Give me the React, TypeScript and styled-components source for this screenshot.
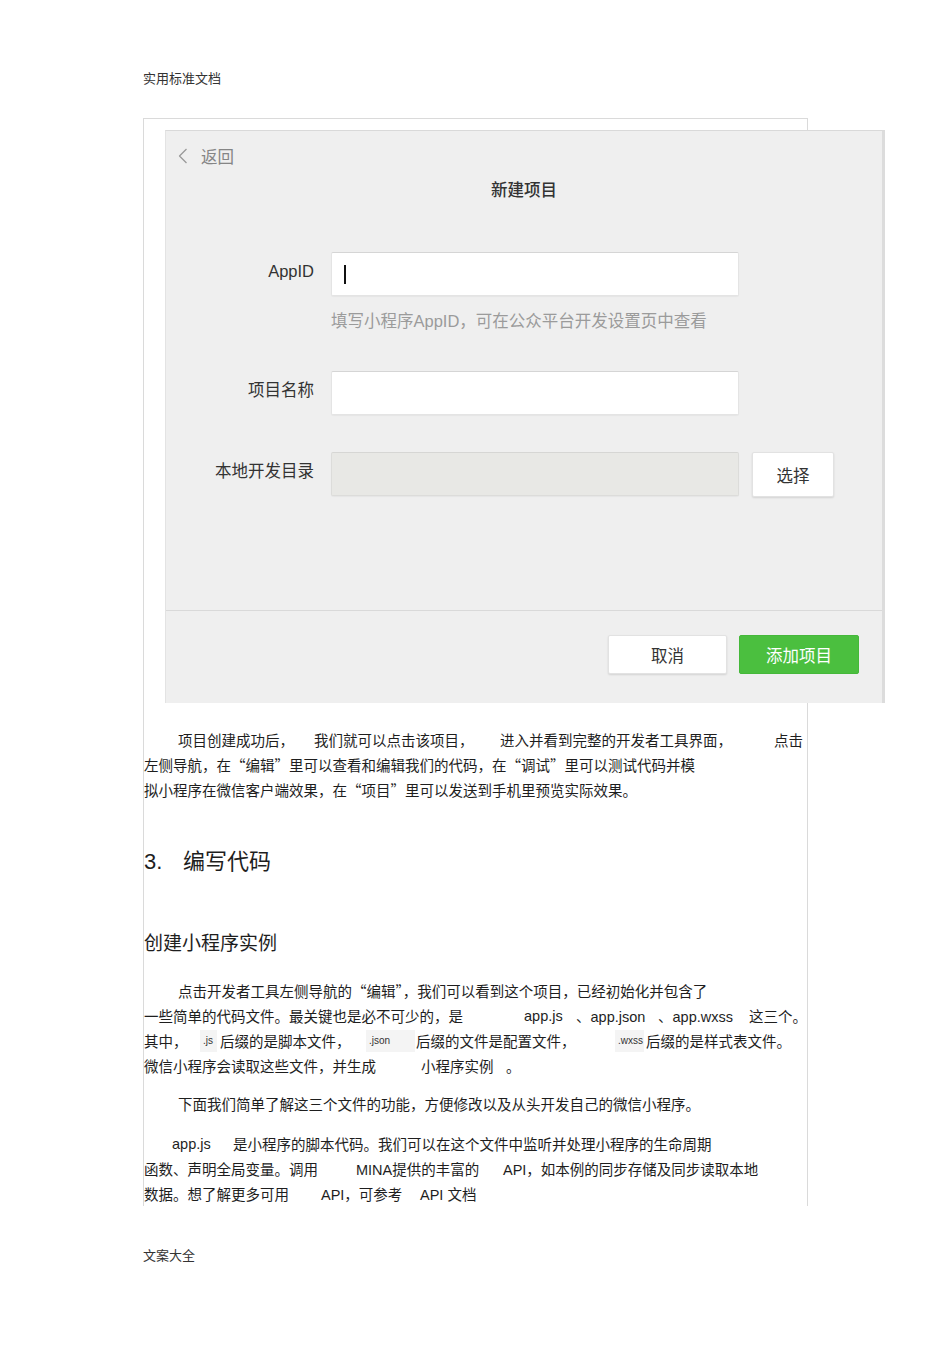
import React from "react";
import styled, { createGlobalStyle } from "styled-components";

const GlobalStyle = createGlobalStyle`
  html, body { margin: 0; padding: 0; background: #fff; }
  body {
    font-family: "Liberation Sans", "Noto Sans CJK SC", sans-serif;
    color: #222;
  }
  * { box-sizing: border-box; }
`;

const Page = styled.div`
  width: 950px;
  padding: 70px 0 80px 143px;
`;

const RunningHead = styled.div<{ $top?: number }>`
  margin-top: ${(p) => p.$top ?? 0}px;
  font-size: 13px;
  line-height: 18px;
  height: 18px;
  color: #333;
`;

const Frame = styled.div`
  margin-top: 30px;
  width: 665px;
  border: 1px solid #dadada;
  border-bottom: none;
  padding-top: 11px;
`;

/* ---------- dialog screenshot ---------- */

const Dialog = styled.section`
  margin-left: 21px;
  width: 720px;
  height: 573px;
  display: flex;
  flex-direction: column;
  background: #efefef;
  border-top: 1px solid #d9d9d9;
  border-left: 1px solid #e3e3e3;
  border-right: 3px solid #dcdcdc;
  font-size: 16.5px;
  color: #333;
`;

const DialogBody = styled.div`
  flex: 1;
  padding-top: 15px;
`;

const BackLink = styled.div`
  display: flex;
  align-items: center;
  gap: 13px;
  height: 20px;
  padding-left: 12px;
  color: #858585;
  font-size: 16.5px;
`;

const Title = styled.h2`
  margin: 13px 0 0;
  text-align: center;
  font-size: 16.5px;
  line-height: 22px;
  font-weight: 500;
  color: #333;
`;

const FormRow = styled.div<{ $top: number }>`
  display: flex;
  align-items: flex-start;
  margin-top: ${(p) => p.$top}px;
`;

const Label = styled.div`
  width: 148px;
  margin-right: 17px;
  padding-top: 9px;
  line-height: 20px;
  text-align: right;
  color: #333;
`;

const Field = styled.div<{ $disabled?: boolean }>`
  width: 408px;
  height: 44px;
  display: flex;
  align-items: center;
  padding-left: 12px;
  background: ${(p) => (p.$disabled ? "#e8e8e5" : "#fff")};
  border: 1px solid ${(p) => (p.$disabled ? "#dcdcda" : "#e4e4e4")};
  border-top-color: ${(p) => (p.$disabled ? "#d6d6d4" : "#d5d5d5")};
  border-radius: 2px;
  box-shadow: 0 1px 1px rgba(0, 0, 0, 0.04);
`;

const Caret = styled.span`
  display: block;
  width: 2px;
  height: 19px;
  background: #111;
`;

const Hint = styled.div`
  margin: 14px 0 0 165px;
  line-height: 22px;
  color: #9b9b9b;
`;

const Button = styled.button<{ $primary?: boolean; $w: number; $h: number }>`
  width: ${(p) => p.$w}px;
  height: ${(p) => p.$h}px;
  padding: 0;
  font-family: inherit;
  font-size: 16.5px;
  border-radius: 2px;
  cursor: pointer;
  color: ${(p) => (p.$primary ? "#fff" : "#333")};
  background: ${(p) => (p.$primary ? "#4bbf3f" : "#fff")};
  border: 1px solid ${(p) => (p.$primary ? "#45b83a" : "#e2e2e2")};
  box-shadow: ${(p) =>
    p.$primary ? "none" : "0 1px 2px rgba(0, 0, 0, 0.12)"};
`;

const PickButton = styled(Button)`
  margin-left: 13px;
`;

const DialogFooter = styled.div`
  height: 93px;
  display: flex;
  justify-content: flex-end;
  align-items: flex-start;
  gap: 12px;
  padding: 24px 23px 0 0;
  border-top: 1px solid #d9d9d9;
`;

/* ---------- document text ---------- */

const Block = styled.div<{ $top: number }>`
  margin-top: ${(p) => p.$top}px;
`;

const Line = styled.div<{ $indent?: number; $cjk?: boolean }>`
  display: flex;
  align-items: center;
  height: 25px;
  padding-left: ${(p) => p.$indent ?? 0}px;
  white-space: nowrap;
  font-size: 14.5px;
  color: #1e1e1e;
  ${(p) =>
    p.$cjk ? `font-family: "Noto Sans CJK SC", "Liberation Sans", sans-serif;` : ""}
`;

const Seg = styled.span<{ $w?: number }>`
  flex: none;
  display: inline-flex;
  align-items: center;
  ${(p) => (p.$w ? `width: ${p.$w}px;` : "")}
`;

const Code = styled.span<{ $w: number }>`
  display: inline-block;
  width: ${(p) => p.$w}px;
  height: 22px;
  line-height: 22px;
  padding-left: 3px;
  background: #f4f4f4;
  font-size: 10px;
  color: #333;
`;

const Heading = styled.h3<{ $top: number; $size: number; $lh: number }>`
  display: flex;
  margin: ${(p) => p.$top}px 0 0;
  font-size: ${(p) => p.$size}px;
  line-height: ${(p) => p.$lh}px;
  font-weight: 400;
  color: #1e1e1e;
  white-space: nowrap;
`;

const Chevron = () => (
  <svg width="10" height="16" viewBox="0 0 10 16" fill="none">
    <polyline
      points="8.5,1 1.5,8 8.5,15"
      stroke="#9a9a9a"
      strokeWidth="1.3"
      strokeLinejoin="round"
    />
  </svg>
);

export default function App() {
  return (
    <>
      <GlobalStyle />
      <Page>
        <RunningHead>实用标准文档</RunningHead>
        <Frame>
          <Dialog>
            <DialogBody>
              <BackLink>
                <Chevron />
                <span>返回</span>
              </BackLink>
              <Title>新建项目</Title>
              <FormRow $top={51}>
                <Label>AppID</Label>
                <Field>
                  <Caret />
                </Field>
              </FormRow>
              <Hint>填写小程序AppID，可在公众平台开发设置页中查看</Hint>
              <FormRow $top={39}>
                <Label>项目名称</Label>
                <Field />
              </FormRow>
              <FormRow $top={37}>
                <Label>本地开发目录</Label>
                <Field $disabled />
                <PickButton $w={82} $h={45}>
                  选择
                </PickButton>
              </FormRow>
            </DialogBody>
            <DialogFooter>
              <Button $w={119} $h={39}>
                取消
              </Button>
              <Button $primary $w={120} $h={39}>
                添加项目
              </Button>
            </DialogFooter>
          </Dialog>

          <Block $top={24}>
            <Line $indent={34}>
              <Seg $w={136}>项目创建成功后，</Seg>
              <Seg $w={186}>我们就可以点击该项目，</Seg>
              <Seg $w={274}>进入并看到完整的开发者工具界面，</Seg>
              <Seg>点击</Seg>
            </Line>
            <Line $cjk>左侧导航，在“编辑”里可以查看和编辑我们的代码，在“调试”里可以测试代码并模</Line>
            <Line $cjk>拟小程序在微信客户端效果，在“项目”里可以发送到手机里预览实际效果。</Line>
          </Block>

          <Heading $top={45} $size={22} $lh={30}>
            <Seg $w={39}>3.</Seg>
            <Seg>编写代码</Seg>
          </Heading>

          <Heading $top={54} $size={19} $lh={26}>
            创建小程序实例
          </Heading>

          <Block $top={21}>
            <Line $indent={34} $cjk>
              点击开发者工具左侧导航的“编辑”，我们可以看到这个项目，已经初始化并包含了
            </Line>
            <Line>
              <Seg $w={380}>一些简单的代码文件。最关键也是必不可少的，是</Seg>
              <Seg $w={52}>app.js</Seg>
              <Seg $w={82}>、app.json</Seg>
              <Seg $w={91}>、app.wxss</Seg>
              <Seg>这三个。</Seg>
            </Line>
            <Line>
              <Seg $w={56}>其中，</Seg>
              <Seg $w={20}>
                <Code $w={17}>.js</Code>
              </Seg>
              <Seg $w={146}>后缀的是脚本文件，</Seg>
              <Seg $w={50}>
                <Code $w={49}>.json</Code>
              </Seg>
              <Seg $w={199}>后缀的文件是配置文件，</Seg>
              <Seg $w={31}>
                <Code $w={29}>.wxss</Code>
              </Seg>
              <Seg>后缀的是样式表文件。</Seg>
            </Line>
            <Line>
              <Seg $w={277}>微信小程序会读取这些文件，并生成</Seg>
              <Seg $w={85}>小程序实例</Seg>
              <Seg>。</Seg>
            </Line>
          </Block>

          <Block $top={13}>
            <Line $indent={34}>
              下面我们简单了解这三个文件的功能，方便修改以及从头开发自己的微信小程序。
            </Line>
          </Block>

          <Block $top={15}>
            <Line $indent={28}>
              <Seg $w={61}>app.js</Seg>
              <Seg>是小程序的脚本代码。我们可以在这个文件中监听并处理小程序的生命周期</Seg>
            </Line>
            <Line>
              <Seg $w={212}>函数、声明全局变量。调用</Seg>
              <Seg $w={147}>MINA提供的丰富的</Seg>
              <Seg>API，如本例的同步存储及同步读取本地</Seg>
            </Line>
            <Line>
              <Seg $w={177}>数据。想了解更多可用</Seg>
              <Seg $w={99}>API，可参考</Seg>
              <Seg>API 文档</Seg>
            </Line>
          </Block>
        </Frame>
        <RunningHead $top={41}>文案大全</RunningHead>
      </Page>
    </>
  );
}
